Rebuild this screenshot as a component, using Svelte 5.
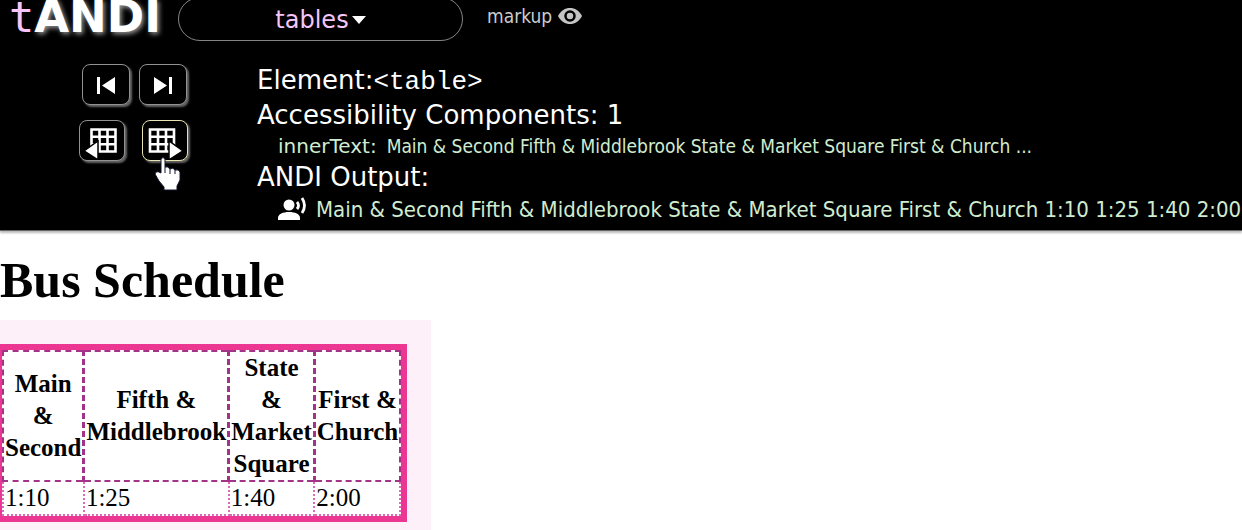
<script>
  const heads = ['Main & Second', 'Fifth & Middlebrook', 'State & Market Square', 'First & Church'];
  const times = ['1:10', '1:25', '1:40', '2:00'];
  const route = heads.join(' ');
</script>

<header>
  <div class="bar">
    <div class="logo"><span>t</span>ANDI</div>
    <button class="module">tables<svg width="14" height="8" viewBox="0 0 14 8"><path d="M0 0h14L7 8z" fill="#fff" /></svg></button>
    <button class="markup">markup
      <svg width="24" height="18" viewBox="0 0 24 18">
        <path d="M0 9C3 3.500 7 1 12 1s9 2.500 12 8c-3 5.500-7 8-12 8S3 14.500 0 9z" fill="#c4c4c4" />
        <circle cx="12" cy="9" r="4.500" fill="none" stroke="#000" stroke-width="2.500" />
      </svg>
    </button>
  </div>
  <div class="panel">
    <nav>
      <div class="pair">
        <button aria-label="Previous element">
          <svg width="46" height="38" viewBox="0 0 46 38"><path d="M14 11h3v17h-3zM32 11v17l-13-8.500z" fill="#fff" /></svg>
        </button>
        <button aria-label="Next element">
          <svg width="46" height="38" viewBox="0 0 46 38"><path d="M14 11v17l13-8.500zM29 11h3v17h-3z" fill="#fff" /></svg>
        </button>
      </div>
      <div class="pair tables">
        <button aria-label="Previous table">
          <svg width="44" height="38" viewBox="0 0 44 38">
            <path d="M11.500 7.500h24v22h-24zM19.500 7v23M27.500 7v23M11 14.700h25M11 22.200h25" fill="none" stroke="#fff" stroke-width="2.600" />
            <path d="M18 19v19L4 29z" fill="#fff" stroke="#000" stroke-width="1.500" />
          </svg>
        </button>
        <button class="current" aria-label="Next table">
          <svg width="44" height="38" viewBox="0 0 44 38">
            <path d="M7 7.500h24v22h-24zM15 7v23M23 7v23M6 14.700h25M6 22.200h25" fill="none" stroke="#fff" stroke-width="2.600" />
            <path d="M26 19v19l14-9z" fill="#fff" stroke="#000" stroke-width="1.500" />
          </svg>
          <svg class="pointer" width="26" height="34" viewBox="0 0 26 34">
            <path d="M6 2Q8-1 10 2v8q3-1 5 2 3-2 5 1 4-1 5 2v8l-3 6v4H9v-3L4 24 0 17q1-4 6-1z" fill="#fff" stroke="#10142c" stroke-width="1" />
            <path d="M10 10v6M15 12v5M20 13v4" stroke="#10142c" stroke-width="1" />
          </svg>
        </button>
      </div>
    </nav>
    <section>
      <div class="label first">Element:<code>&lt;table&gt;</code></div>
      <div class="label second">Accessibility Components: 1</div>
      <div class="inner"><span>innerText:</span>{route} ...</div>
      <div class="label third">ANDI Output:</div>
      <div class="output">
        <svg width="30" height="26" viewBox="0 0 30 26">
          <circle cx="11" cy="8" r="5.500" fill="#fff" />
          <path d="M0 23v-2c0-4 5-6 11-6s11 2 11 6v2z" fill="#fff" />
          <path d="M19 5q3 3.500 0 7M24 1q5 7.500 0 15" fill="none" stroke="#fff" stroke-width="2.800" />
        </svg>
        {route} {times.join(' ')}
      </div>
    </section>
  </div>
</header>

<main>
  <h1>Bus Schedule</h1>
  <div class="halo">
    <div class="outline">
      <table>
        <thead><tr>{#each heads as head}<th scope="col">{head}</th>{/each}</tr></thead>
        <tbody><tr>{#each times as time}<td>{time}</td>{/each}</tr></tbody>
      </table>
    </div>
  </div>
</main>

<style>
  :global(body) { margin: 0; background: #fff; overflow: hidden; }
  header {
    background: #000;
    color: #fff;
    height: 230px;
    border-bottom: 1px solid #666;
    box-shadow: 0 2px 2px #bbb;
    font-family: "DejaVu Sans", sans-serif;
    white-space: nowrap;
    overflow: hidden;
  }
  button { background: #000; color: inherit; font: inherit; padding: 0; border: 0; box-sizing: border-box; }
  svg { display: block; flex: none; }
  .bar { display: flex; align-items: flex-start; height: 60px; }
  .logo {
    width: 169px;
    padding-left: 9px;
    margin-top: -9px;
    font: bold 45px/52px "DejaVu Sans", sans-serif;
    text-shadow: 2px 2px 5px #999;
  }
  .logo span { font: 42px/52px "DejaVu Sans Mono", monospace; color: #f9c4f8; text-shadow: none; }
  .module {
    display: flex;
    align-items: center;
    justify-content: center;
    width: 285px;
    height: 44px;
    margin-top: -3px;
    padding-top: 2px;
    border: 1px solid #858585;
    border-radius: 22px;
    color: #f4c6fa;
    font-size: 24px;
    gap: 3px;
  }
  .markup {
    display: flex;
    align-items: center;
    gap: 6px;
    margin: 3px 0 0 24px;
    font: 19px/26px "DejaVu Sans Condensed", "Noto Sans", sans-serif;
    color: #ccc;
  }
  .panel { display: flex; }
  nav { width: 257px; flex: none; }
  .pair { display: flex; gap: 9px; padding: 4px 0 0 82px; }
  .pair.tables { gap: 17px; padding: 15px 0 0 79px; }
  .pair button {
    position: relative;
    border: 1px solid #929292;
    border-radius: 8px;
    box-shadow: 2px 2px 2px #666;
    height: 41px;
  }
  .pair button.current { border-color: #e8e3b0; }
  .pair .pointer { position: absolute; left: 12px; top: 36px; }
  .label { font-size: 26px; line-height: 32px; }
  .first { margin-top: 4px; }
  .second { margin-top: 3px; }
  code { font: 26px/26px "Liberation Mono", monospace; }
  .inner, .output { color: #d0eccf; font-family: "DejaVu Sans Condensed", "Noto Sans", sans-serif; }
  .inner { padding-left: 21px; font-size: 19px; line-height: 30px; }
  .inner span { margin-right: 10px; font: 20px/30px "DejaVu Sans", sans-serif; }
  .output { display: flex; align-items: center; gap: 8px; padding-left: 21px; font-size: 22px; line-height: 34px; }
  main { font: 25px/32px "Liberation Serif", serif; color: #000; }
  h1 { margin: 0; padding: 20px 0 11px; font-size: 50px; line-height: 58px; }
  .halo { width: fit-content; padding: 24px 24px 24px 0; background: #fdf0f9; }
  .outline { border: 6px solid #eb3792; border-left-width: 2px; background: #fff; }
  table { border-collapse: collapse; }
  th, td { padding: 0 1px; }
  th { width: 1px; border: 2px dashed #a33389; border-width: 2px 3px; }
  th:first-child { border-left-width: 2px; }
  th:last-child { border-right-width: 2px; }
  td { border: 2px dotted #dc6abb; }
</style>
